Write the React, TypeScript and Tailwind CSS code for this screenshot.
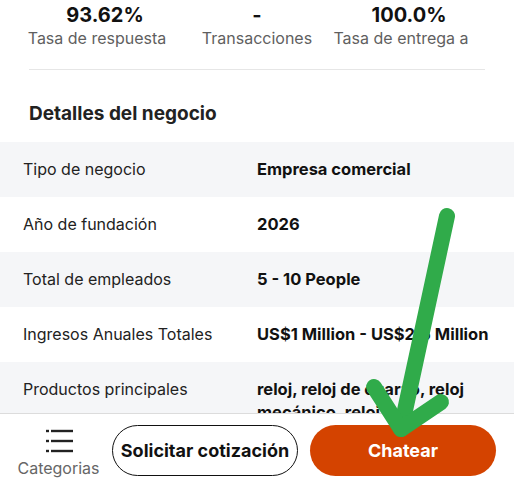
import React from 'react';

const STATS = [
    { value: '93.62%', label: 'Tasa de respuesta', shift: 'mr-[16px]' },
    { value: '-', label: 'Transacciones', shift: '' },
    { value: '100.0%', label: 'Tasa de entrega a', shift: 'mr-[16px]' },
];

const DETAILS = [
    { label: 'Tipo de negocio', value: 'Empresa comercial' },
    { label: 'Año de fundación', value: '2026' },
    { label: 'Total de empleados', value: '5 - 10 People' },
    { label: 'Ingresos Anuales Totales', value: 'US$1 Million - US$2.5 Million' },
    { label: 'Productos principales', value: 'reloj, reloj de cuarzo, reloj mecánico, reloj' },
];

const App: React.FC = () => {
    return (
        <div className="relative w-[514px] h-[500px] bg-white overflow-hidden font-['Inter','Liberation_Sans',sans-serif] text-[#222]">
            <div className="h-[413px] overflow-hidden">
                <div className="grid grid-cols-3 mx-[29px] pt-[3px]">
                    {STATS.map((s, idx) => (
                        <div key={idx} className="flex flex-col items-center">
                            <span className="text-[20px] leading-[24px] font-bold text-[#111]">{s.value}</span>
                            <span className={`text-[16px] leading-[22px] text-[#5f5f5f] whitespace-nowrap ${s.shift}`}>{s.label}</span>
                        </div>
                    ))}
                </div>
                <div className="mx-[29px] mt-[20px] border-t border-[#e6e6e6]" />
                <h3 className="px-[29px] mt-[32px] text-[19px] leading-[24px] font-bold text-[#222]">Detalles del negocio</h3>
                <div className="mt-[16px]">
                    {DETAILS.map((d, idx) => (
                        <div key={idx} className={`flex py-4 leading-[23px] ${idx % 2 === 0 ? 'bg-[#f5f6f8]' : 'bg-white'}`}>
                            <span className="w-[257px] pl-[23px] shrink-0 text-[16px] text-[#222]">{d.label}</span>
                            <span className="flex-1 pr-[18px] text-[16.5px] font-bold text-[#111]">{d.value}</span>
                        </div>
                    ))}
                </div>
            </div>

            <div className="h-[87px] border-t border-[#dcdcdc] flex items-start pt-[10px] px-[17px] gap-[12px]">
                <div className="flex flex-col items-center w-[83px] shrink-0">
                    <svg width="30" height="26" viewBox="0 0 30 26" className="mt-[4px]">
                        <g stroke="#222" strokeWidth="2.4">
                            <line x1="2" y1="3" x2="5" y2="3" />
                            <line x1="7" y1="3" x2="29" y2="3" />
                            <line x1="2" y1="13" x2="5" y2="13" />
                            <line x1="7" y1="13" x2="29" y2="13" />
                            <line x1="2" y1="23" x2="5" y2="23" />
                            <line x1="7" y1="23" x2="29" y2="23" />
                        </g>
                    </svg>
                    <span className="text-[16px] leading-[20px] mt-[4px] text-[#666]">Categorias</span>
                </div>
                <button className="mt-[1px] w-[186px] h-[51px] rounded-full border-[1.5px] border-[#111] text-[18px] font-bold text-[#111] whitespace-nowrap">
                    Solicitar cotización
                </button>
                <button className="mt-[1px] w-[186px] h-[51px] rounded-full bg-[#d44300] text-[18px] font-bold text-white">
                    Chatear
                </button>
            </div>

            <svg className="absolute inset-0 pointer-events-none" width="514" height="500" viewBox="0 0 514 500">
                <g stroke="#30ab4a" strokeWidth="16" strokeLinecap="round" strokeLinejoin="round" fill="none">
                    <line x1="447" y1="216" x2="401" y2="429" />
                    <polyline points="374,387 401,429 441,402" />
                </g>
            </svg>
        </div>
    );
};

export default App;
